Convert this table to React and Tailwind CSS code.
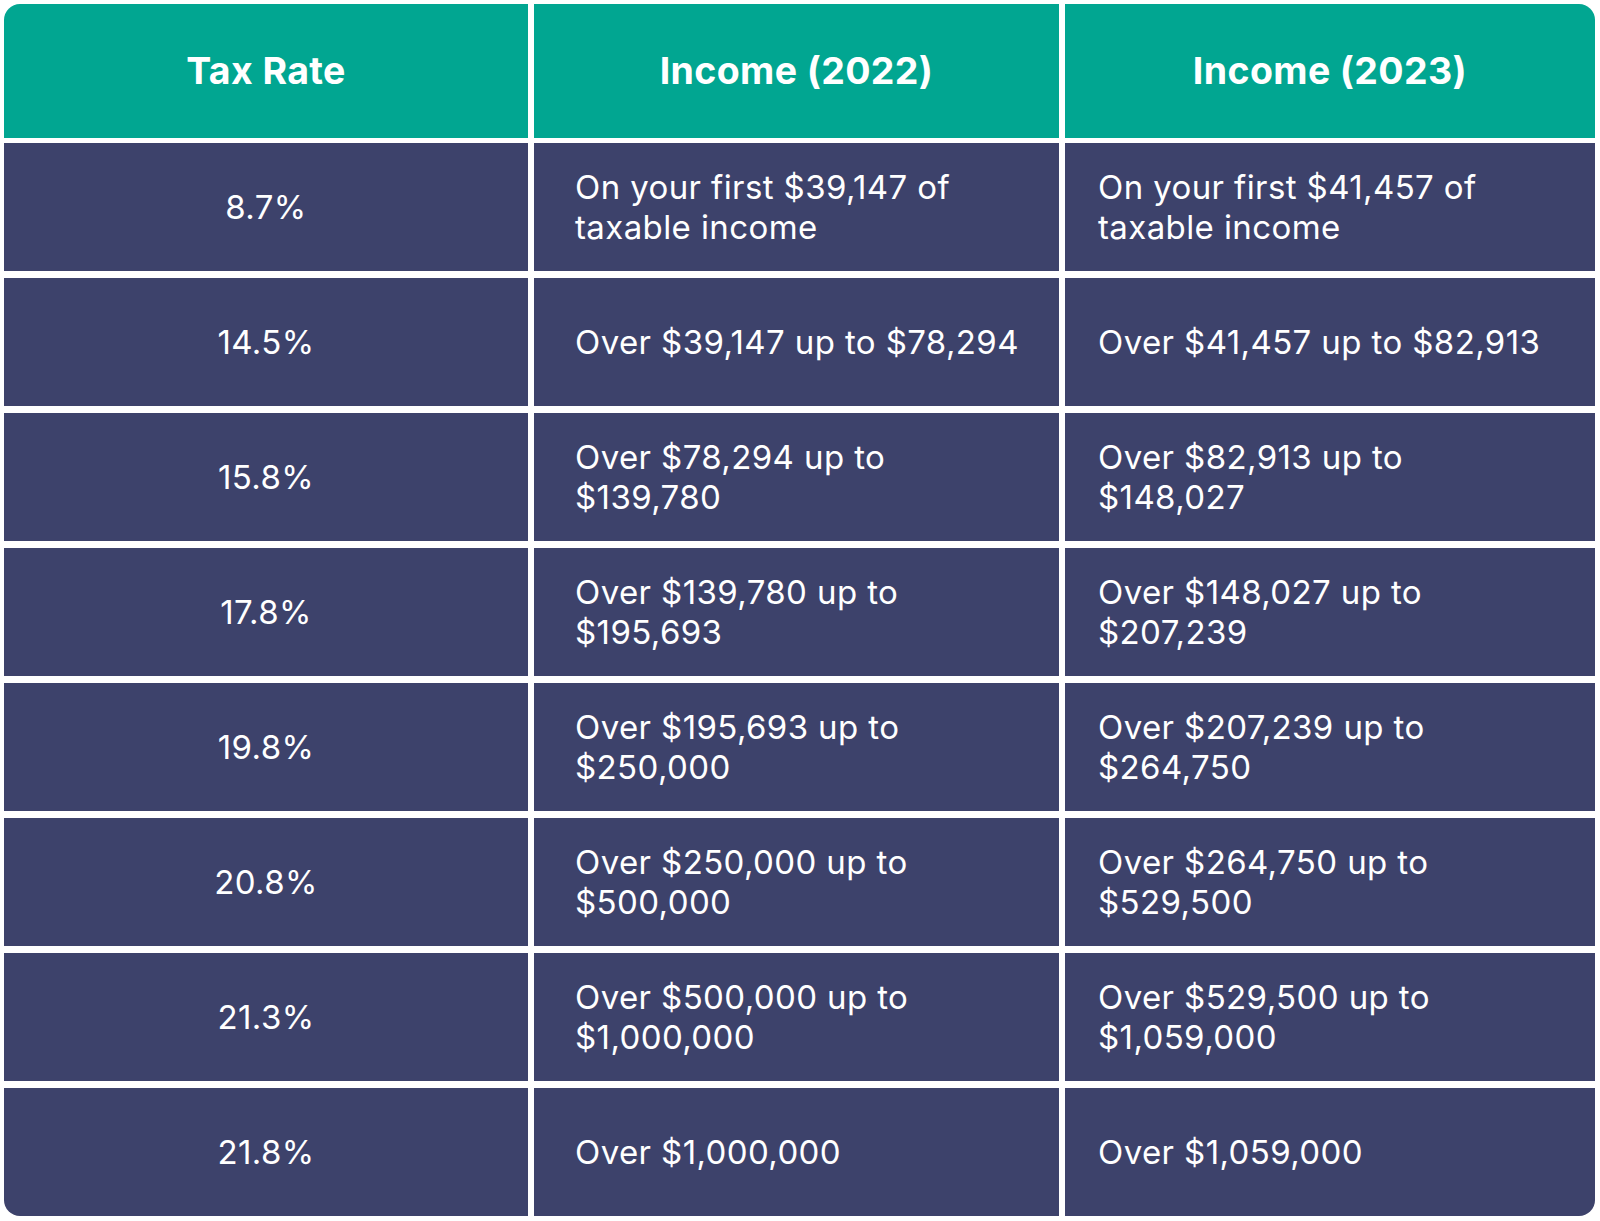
const ROWS = [
  { rate: '8.7%', y2022: ['On your first $39,147 of', 'taxable income'], y2023: ['On your first $41,457 of', 'taxable income'] },
  { rate: '14.5%', y2022: ['Over $39,147 up to $78,294'], y2023: ['Over $41,457 up to $82,913'] },
  { rate: '15.8%', y2022: ['Over $78,294 up to', '$139,780'], y2023: ['Over $82,913 up to', '$148,027'] },
  { rate: '17.8%', y2022: ['Over $139,780 up to', '$195,693'], y2023: ['Over $148,027 up to', '$207,239'] },
  { rate: '19.8%', y2022: ['Over $195,693 up to', '$250,000'], y2023: ['Over $207,239 up to', '$264,750'] },
  { rate: '20.8%', y2022: ['Over $250,000 up to', '$500,000'], y2023: ['Over $264,750 up to', '$529,500'] },
  { rate: '21.3%', y2022: ['Over $500,000 up to', '$1,000,000'], y2023: ['Over $529,500 up to', '$1,059,000'] },
  { rate: '21.8%', y2022: ['Over $1,000,000'], y2023: ['Over $1,059,000'] },
]

function Lines({ lines }) {
  return lines.map((l, i) => <div key={i} className="whitespace-nowrap">{l}</div>)
}

export default function App() {
  return (
    <div className="min-h-[1221px] bg-white p-[4px] pr-[5px]">
      <div
        className="flex w-[1591px] flex-col gap-[7px] overflow-hidden rounded-[16px] text-white"
        style={{ fontFamily: "Inter, 'Noto Sans', sans-serif" }}
      >
        {/* header */}
        <div className="grid h-[134px] grid-cols-[524px_525px_1fr] gap-[6px] mb-[-2px]">
          {['Tax Rate', 'Income (2022)', 'Income (2023)'].map(h => (
            <div key={h} className="flex items-center justify-center bg-[#01a691] text-[37.5px] font-bold tracking-[0.01em]">
              {h}
            </div>
          ))}
        </div>

        {ROWS.map(r => (
          <div key={r.rate} className="grid h-[128px] grid-cols-[524px_525px_1fr] gap-[6px] text-[33px] leading-[40px] tracking-[0.012em]">
            <div className="flex items-center justify-center bg-[#3d426b]">{r.rate}</div>
            <div className="flex flex-col justify-center bg-[#3d426b] pl-[41px]">
              <Lines lines={r.y2022} />
            </div>
            <div className="flex flex-col justify-center bg-[#3d426b] pl-[33px]">
              <Lines lines={r.y2023} />
            </div>
          </div>
        ))}
      </div>
    </div>
  )
}
